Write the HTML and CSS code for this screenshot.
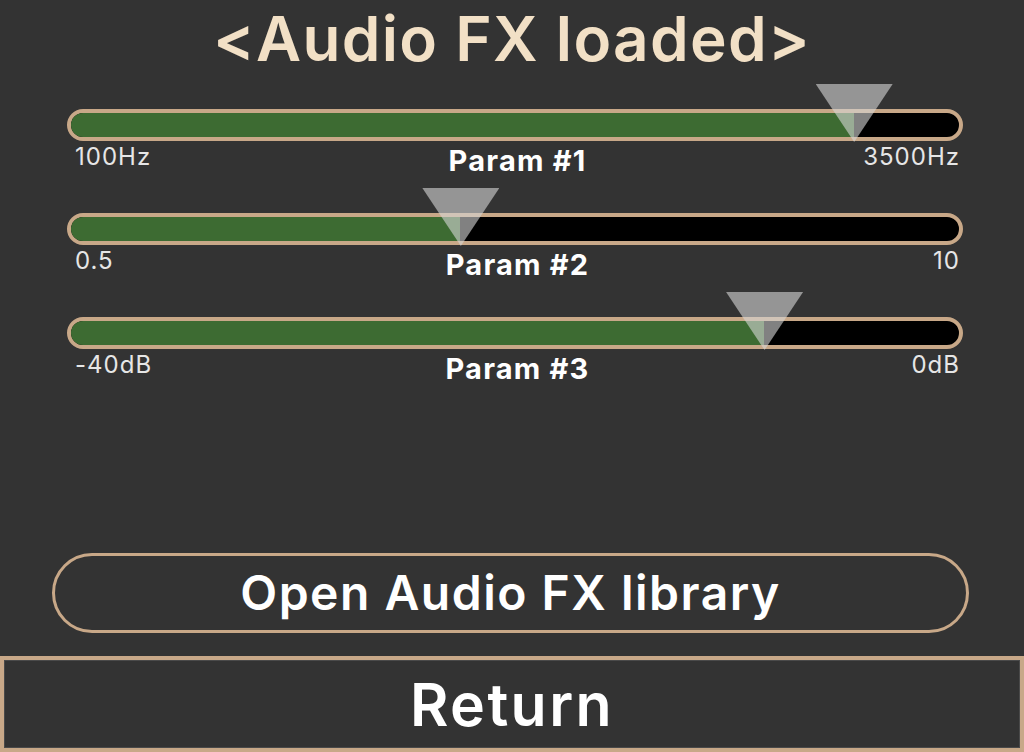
FILE: index.html
```html
<!DOCTYPE html>
<html>
<head>
<meta charset="utf-8">
<link rel="stylesheet" href="styles.css">
</head>
<body>
<div class="screen">
  <h1 class="title">&lt;Audio FX loaded&gt;</h1>
  <div class="sliders">
    <div class="slider">
      <div class="track-wrap">
        <div class="track"><div class="fill" style="width: 88.2%"></div></div>
        <div class="thumb" style="left: 87.8%"></div>
      </div>
      <div class="labels">
        <span class="min">100Hz</span>
        <span class="name">Param #1</span>
        <span class="max">3500Hz</span>
      </div>
    </div>
    <div class="slider">
      <div class="track-wrap">
        <div class="track"><div class="fill" style="width: 43.8%"></div></div>
        <div class="thumb" style="left: 43.9%"></div>
      </div>
      <div class="labels">
        <span class="min">0.5</span>
        <span class="name">Param #2</span>
        <span class="max">10</span>
      </div>
    </div>
    <div class="slider">
      <div class="track-wrap">
        <div class="track"><div class="fill" style="width: 78.0%"></div></div>
        <div class="thumb" style="left: 77.8%"></div>
      </div>
      <div class="labels">
        <span class="min">-40dB</span>
        <span class="name">Param #3</span>
        <span class="max">0dB</span>
      </div>
    </div>
  </div>
  <button class="library">Open Audio FX library</button>
  <button class="return">Return</button>
</div>
</body>
</html>
```
FILE: styles.css
```css
html, body {
  margin: 0;
  padding: 0;
  background: #333333;
}
.screen {
  height: 752px;
  display: flex;
  flex-direction: column;
  font-family: Inter, "Noto Sans", sans-serif;
  overflow: hidden;
}
.title {
  margin: 0;
  height: 80px;
  line-height: 78px;
  text-align: center;
  font-size: 62px;
  font-weight: 600;
  letter-spacing: 1.3px;
  color: #f2e0c6;
}
.sliders {
  display: flex;
  flex-direction: column;
  margin: 0 61px 0 67px;
}
.slider {
  height: 104px;
  padding-top: 29px;
  box-sizing: border-box;
}
.track-wrap {
  position: relative;
}
.track {
  height: 32px;
  box-sizing: border-box;
  border: 4px solid #c8a888;
  border-radius: 16px;
  background: #000;
  overflow: hidden;
}
.fill {
  height: 100%;
  background: #3d6b32;
}
.thumb {
  position: absolute;
  top: -25px;
  width: 77px;
  height: 58px;
  margin-left: -38px;
  background: rgba(215, 215, 215, 0.6);
  clip-path: polygon(0 0, 100% 0, 50% 100%);
}
.labels {
  display: flex;
  justify-content: space-between;
  align-items: flex-start;
  padding: 0 3px 0 8px;
  margin-top: 1px;
}
.min, .max {
  font-size: 24px;
  letter-spacing: 1px;
  color: #e6e6e6;
  line-height: 30px;
  width: 130px;
}
.max {
  text-align: right;
}
.name {
  font-size: 29px;
  font-weight: 700;
  letter-spacing: 1.2px;
  color: #ffffff;
  line-height: 36px;
  margin-top: 1px;
}
.library {
  margin: auto 55px 0 52px;
  height: 80px;
  border: 3px solid #c8a888;
  border-radius: 40px;
  background: transparent;
  color: #ffffff;
  font-family: inherit;
  font-size: 48px;
  font-weight: 600;
  letter-spacing: 1.5px;
  padding: 0 0 2px;
}
.return {
  margin: 23px 0 0 0;
  height: 96px;
  border: 4px solid #c8a888;
  background: #333333;
  color: #ffffff;
  font-family: inherit;
  font-size: 59px;
  font-weight: 600;
  letter-spacing: 2.4px;
  padding: 0;
  box-shadow: inset 0 0 0 1px #4a4a4a;
}
```
